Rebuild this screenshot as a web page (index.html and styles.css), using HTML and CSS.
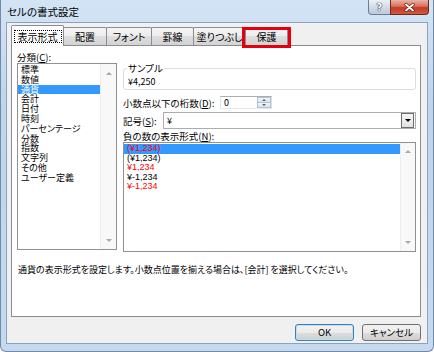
FILE: index.html
```html
<!DOCTYPE html>
<html lang="ja">
<head>
  <meta charset="UTF-8">
  <title>セルの書式設定</title>
  <link rel="stylesheet" href="styles.css">
</head>
<body>
  <div class="window">
    <!-- Title bar -->
    <div class="titlebar">
      <span class="title">セルの書式設定</span>
      <div class="caption-buttons">
        <span class="cap-btn help">?</span>
        <span class="cap-btn close">
          <svg width="11" height="9" viewBox="0 0 11 9">
            <path d="M2 1.5 L9 7.5 M9 1.5 L2 7.5" stroke="#5a1a10" stroke-width="3.2" stroke-linecap="round"/>
            <path d="M2 1.5 L9 7.5 M9 1.5 L2 7.5" stroke="#fff" stroke-width="1.8" stroke-linecap="round"/>
          </svg>
        </span>
      </div>
    </div>

    <div class="client">
      <!-- Tabs -->
      <div class="tabs">
        <div class="tab active tab-format"><span class="focus">表示形式</span></div>
        <div class="tab tab-align">配置</div>
        <div class="tab tab-font">フォント</div>
        <div class="tab tab-border">罫線</div>
        <div class="tab tab-fill">塗りつぶし</div>
        <div class="tab tab-protect marked">保護</div>
      </div>

      <!-- Tab page -->
      <div class="panel">
        <div class="columns">
          <div class="col-left">
            <div class="label">分類(<u>C</u>):</div>
            <div class="listbox cat">
              <ul class="items">
                <li>標準</li>
                <li>数値</li>
                <li class="sel">通貨</li>
                <li>会計</li>
                <li>日付</li>
                <li>時刻</li>
                <li>パーセンテージ</li>
                <li>分数</li>
                <li>指数</li>
                <li>文字列</li>
                <li>その他</li>
                <li>ユーザー定義</li>
              </ul>
              <div class="vscroll"><span class="arrow up"></span><span class="arrow down"></span></div>
            </div>
          </div>

          <div class="col-right">
            <div class="sample">
              <span class="sample-legend">サンプル</span>
              <div class="sample-value">¥4,250</div>
            </div>

            <div class="field-row decimals">
              <span class="label">小数点以下の桁数(<u>D</u>):</span>
              <div class="spin">
                <span class="spin-value">0</span>
                <div class="spin-buttons">
                  <span><i class="mini up"></i></span>
                  <span><i class="mini down"></i></span>
                </div>
              </div>
            </div>

            <div class="field-row symbol">
              <span class="label">記号(<u>S</u>):</span>
              <div class="select">
                <span class="select-value">¥</span>
                <span class="drop"><i class="drop-arrow"></i></span>
              </div>
            </div>

            <div class="label neg-label">負の数の表示形式(<u>N</u>):</div>
            <div class="listbox neg">
              <ul class="items">
                <li class="sel red">(¥1,234)</li>
                <li>(¥1,234)</li>
                <li class="red">¥1,234</li>
                <li>¥-1,234</li>
                <li class="red">¥-1,234</li>
              </ul>
              <div class="vscroll"><span class="arrow up"></span><span class="arrow down"></span></div>
            </div>
          </div>
        </div>

        <p class="desc">通貨の表示形式を設定します。小数点位置を揃える場合は、[会計] を選択してください。</p>
      </div>

      <!-- Dialog buttons -->
      <div class="buttons">
        <button class="btn default">OK</button>
        <button class="btn">キャンセル</button>
      </div>
    </div>
  </div>
</body>
</html>
```

FILE: styles.css
```css
* {
  margin: 0;
  padding: 0;
  box-sizing: border-box;
}

body {
  width: 434px;
  height: 352px;
  overflow: hidden;
  font-family: "Noto Sans CJK JP", "Noto Sans", sans-serif;
  font-size: 9.5px;
  font-feature-settings: "palt";
  color: #000;
  background: #fff;
}

/* Window frame */
.window {
  width: 434px;
  height: 352px;
  display: flex;
  flex-direction: column;
  background: linear-gradient(#d3e4f5, #bfd5ec 30%, #c6daef);
  border: 1px solid #7389a6;
  border-top: none;
  border-radius: 0 0 6px 6px;
}

.titlebar {
  height: 22px;
  flex: none;
  display: flex;
  justify-content: space-between;
  align-items: flex-start;
  padding: 0 4px 0 6px;
}

.title {
  font-size: 10.5px;
  line-height: 22px;
  padding-top: 1px;
}

.caption-buttons {
  display: flex;
}

.cap-btn {
  height: 15px;
  display: flex;
  align-items: center;
  justify-content: center;
  border: 1px solid #6d7d92;
  border-top: none;
}

.help {
  width: 23px;
  border-radius: 0 0 0 4px;
  background: linear-gradient(#eef2f7, #d3dce7 50%, #bccadb);
  color: #fff;
  font-family: "DejaVu Sans", sans-serif;
  font-weight: bold;
  font-size: 10px;
  text-shadow: 0 0 1px #2b3c55, 0 0 1px #2b3c55, 0 0 1px #2b3c55;
}

.close {
  width: 39px;
  margin-left: -1px;
  border-color: #6e2a20;
  border-radius: 0 0 4px 0;
  background: linear-gradient(#eab3a6, #d8705c 45%, #c43a22 55%, #d25a3d);
}

/* Client area */
.client {
  flex: 1;
  margin: 0 5px 7px 5px;
  background: #f0f0f0;
  border: 1px solid #8da2bd;
  padding: 2px 6px 0 4px;
  display: flex;
  flex-direction: column;
}

.tabs {
  display: flex;
  align-items: flex-end;
  height: 20px;
  flex: none;
  position: relative;
  z-index: 1;
  font-size: 10px;
}

.tab {
  height: 18px;
  margin-left: -1px;
  border: 1px solid #898c95;
  border-bottom: none;
  border-radius: 2px 2px 0 0;
  background: linear-gradient(#f4f4f4, #ececec 50%, #dedede 50%, #d3d3d3);
  display: flex;
  align-items: center;
  justify-content: center;
  line-height: 12px;
  white-space: nowrap;
}

.tab.active {
  height: 21px;
  margin-left: 0;
  margin-bottom: -1px;
  background: #fff;
}

.tab-format { width: 53px; }
.tab-align { width: 44px; }
.tab-font { width: 46px; }
.tab-border { width: 43px; }
.tab-fill { width: 53px; }
.tab-protect { width: 43px; }

.focus {
  border: 1px dotted #000;
  padding: 0 3px;
  line-height: 11px;
}

.tab.marked {
  position: relative;
}

/* annotation box around the 保護 tab */
.tab.marked::after {
  content: "";
  position: absolute;
  left: -4px;
  right: -4px;
  top: -1px;
  bottom: -3px;
  border: 3px solid #e4000c;
}

.panel {
  height: 272px;
  flex: none;
  background: #fff;
  border: 1px solid #898c95;
  padding: 5px 4px 0 5px;
}

.columns {
  display: flex;
  gap: 6px;
}

.col-left {
  width: 100px;
}

.col-right {
  width: 293px;
  display: flex;
  flex-direction: column;
}

.label {
  line-height: 12px;
  white-space: nowrap;
}

/* List boxes */
.listbox {
  display: flex;
  border: 1px solid #8e9196;
  background: #fff;
}

.cat {
  height: 187px;
}

.neg {
  height: 110px;
}

.items {
  flex: 1;
  list-style: none;
  font-size: 9px;
  line-height: 9.8px;
  padding-top: 1px;
}

.neg .items {
  font-family: "Liberation Sans", sans-serif;
  line-height: 9.6px;
}

.items li {
  padding-left: 3px;
  white-space: nowrap;
}

.items .sel {
  background: #3399ff;
  color: #fff;
}

.items .red {
  color: #ff0000;
}

.vscroll {
  width: 16px;
  background: #f8f8f8;
  border-left: 1px solid #ededed;
  display: flex;
  flex-direction: column;
  justify-content: space-between;
  align-items: center;
  padding: 8px 0 7px;
}

.neg .vscroll {
  width: 15px;
  padding: 7px 0 7px;
}

.arrow {
  width: 0;
  height: 0;
  border-left: 3px solid transparent;
  border-right: 3px solid transparent;
}

.arrow.up {
  border-bottom: 3px solid #a8a8a8;
}

.arrow.down {
  border-top: 3px solid #a8a8a8;
}

/* Sample group */
.sample {
  margin-top: 17px;
  height: 22px;
  border: 1px solid #d5dfe5;
  border-radius: 3px;
  padding: 0 4px;
}

.sample-legend {
  display: block;
  width: fit-content;
  margin: -7px 0 0 -1px;
  padding: 0 1px;
  line-height: 12px;
  background: #fff;
}

.sample-value {
  margin-top: 3px;
  line-height: 10px;
  font-size: 9px;
}

.field-row {
  display: flex;
  align-items: center;
}

.decimals {
  margin-top: 6px;
  height: 13px;
}

.decimals .label {
  width: 97px;
}

.spin {
  width: 52px;
  height: 13px;
  display: flex;
  background: #fff;
  border: 1px solid #abadb3;
  border-color: #abadb3 #dbdfe6 #e3e9ef #e2e3ea;
}

.spin-value {
  flex: 1;
  padding-left: 3px;
  line-height: 11px;
  font-size: 9px;
}

.spin-buttons {
  width: 14px;
  display: flex;
  flex-direction: column;
}

.spin-buttons span {
  flex: 1;
  display: flex;
  align-items: center;
  justify-content: center;
  background: linear-gradient(#f3f6fa, #dbe3ec);
  border: 1px solid #b3c1d2;
}

.spin-buttons span + span {
  border-top: none;
}

.mini {
  width: 0;
  height: 0;
  border-left: 2px solid transparent;
  border-right: 2px solid transparent;
}

.mini.up {
  border-bottom: 2px solid #4d6185;
}

.mini.down {
  border-top: 2px solid #4d6185;
}

.symbol {
  margin-top: 3px;
  height: 17px;
}

.symbol .label {
  width: 40px;
}

.select {
  flex: 1;
  height: 17px;
  display: flex;
  border: 1px solid #abadb3;
  background: #fff;
  padding: 0 1px 0 0;
}

.select-value {
  flex: 1;
  padding-left: 3px;
  line-height: 15px;
  font-size: 9px;
}

.drop {
  width: 13px;
  display: flex;
  align-items: center;
  justify-content: center;
  border: 1px solid #6e6e6e;
  background: linear-gradient(#f6f6f6, #e2e2e2);
}

.drop-arrow {
  width: 0;
  height: 0;
  border-left: 3px solid transparent;
  border-right: 3px solid transparent;
  border-top: 3px solid #000;
}

.neg-label {
  margin-top: 1px;
}

.desc {
  margin-top: 13px;
  padding-left: 1px;
  font-size: 9px;
  line-height: 10px;
  white-space: nowrap;
}

/* Dialog buttons */
.buttons {
  display: flex;
  justify-content: flex-end;
  gap: 8px;
  margin-top: 7px;
}

.btn {
  width: 59px;
  height: 17px;
  border: 1px solid #707070;
  border-radius: 3px;
  background: linear-gradient(#f2f2f2, #ebebeb 50%, #dddddd 50%, #cfcfcf);
  font: inherit;
  line-height: 15px;
  color: #000;
}

.btn.default {
  border-color: #3c7fb1;
  box-shadow: inset 0 0 0 1px #b6e3fa;
}
```
